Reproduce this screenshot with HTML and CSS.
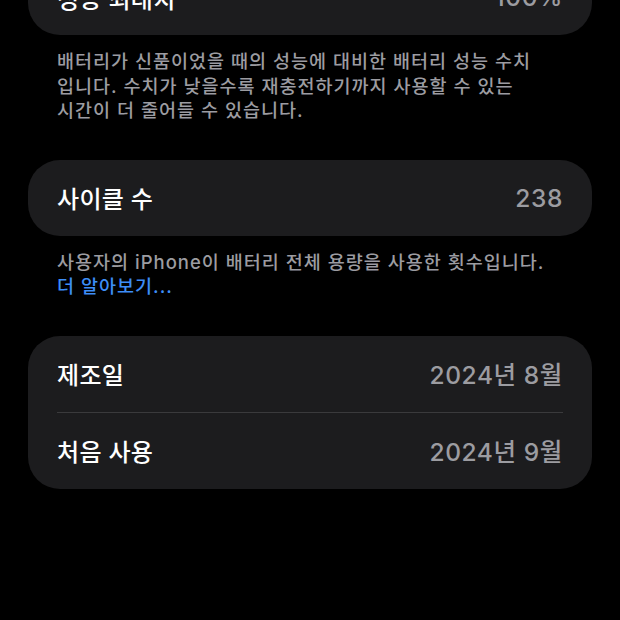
FILE: index.html
```html
<!DOCTYPE html>
<html lang="ko">
<head>
<meta charset="UTF-8">
<meta name="viewport" content="width=device-width, initial-scale=1.0">
<title>배터리 성능 상태</title>
<link rel="stylesheet" href="styles.css">
</head>
<body>
<div class="settings">
  <div class="card">
    <div class="row">
      <span class="label">성능 최대치</span>
      <span class="value">100%</span>
    </div>
  </div>
  <p class="caption">배터리가 신품이었을 때의 성능에 대비한 배터리 성능 수치<br>입니다. 수치가 낮을수록 재충전하기까지 사용할 수 있는<br>시간이 더 줄어들 수 있습니다.</p>

  <div class="card">
    <div class="row">
      <span class="label">사이클 수</span>
      <span class="value">238</span>
    </div>
  </div>
  <p class="caption">사용자의 iPhone이 배터리 전체 용량을 사용한 횟수입니다.<br><a class="link" href="#">더 알아보기...</a></p>

  <div class="card">
    <div class="row">
      <span class="label">제조일</span>
      <span class="value">2024년 8월</span>
    </div>
    <div class="divider"></div>
    <div class="row">
      <span class="label">처음 사용</span>
      <span class="value">2024년 9월</span>
    </div>
  </div>
</div>
</body>
</html>
```

FILE: styles.css
```css
body {
  margin: 0;
  padding: 0;
  background-color: #000000;
  font-family: 'Inter', 'Noto Sans CJK KR', sans-serif;
  color: #ffffff;
  overflow: hidden;
}

.settings {
  padding: 0 28px;
  margin-top: -41px; /* first card is scrolled partly out of view */
}

.card {
  background-color: #1c1c1e;
  border-radius: 32px;
}

.row {
  height: 76px;
  padding: 0 29px;
  display: flex;
  justify-content: space-between;
  align-items: center;
}

.label {
  font-size: 24px;
  font-weight: 500;
  letter-spacing: 0.3px;
  color: #ffffff;
}

.value {
  font-size: 24.5px;
  font-weight: 500;
  letter-spacing: 0.6px;
  color: #9c9ca1;
}

.divider {
  height: 1px;
  margin: 0 29px;
  background-color: #3a3a3c;
}

.caption {
  margin: 0 0 37px 0;
  padding: 14px 29px 0 29px;
  font-size: 18.5px;
  font-weight: 500;
  letter-spacing: 1px;
  line-height: 24.5px;
  color: #9c9ca1;
  white-space: nowrap;
}

.link {
  color: #3d8ef7;
  text-decoration: none;
}
```
